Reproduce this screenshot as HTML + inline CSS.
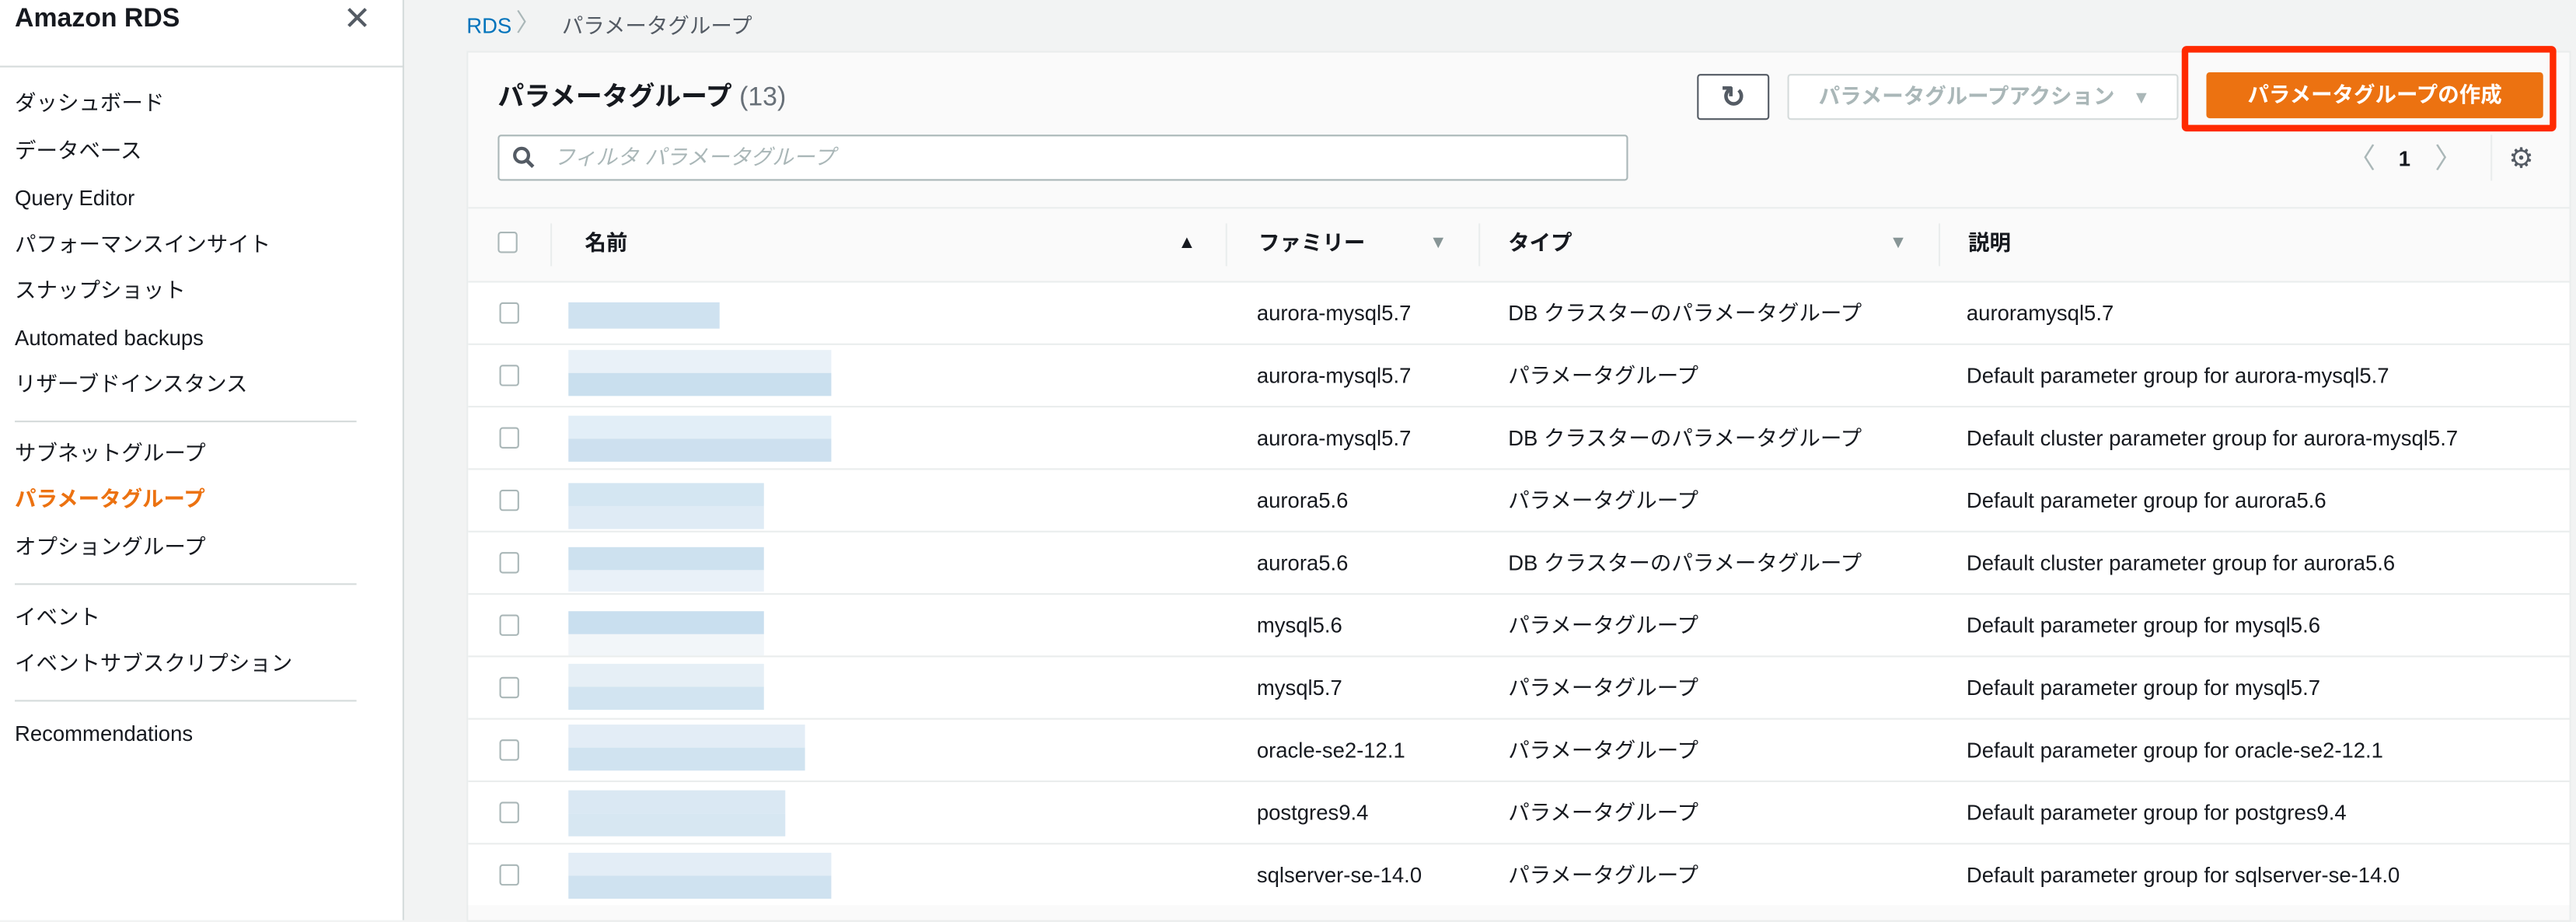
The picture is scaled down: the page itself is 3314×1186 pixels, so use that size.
<!DOCTYPE html>
<html><head><meta charset="utf-8"><style>
*{box-sizing:border-box;margin:0;padding:0}
html,body{width:3314px;height:1154px;overflow:hidden;background:#f2f3f3}
#w{position:absolute;left:0;top:0;width:1568px;height:546px;transform:scale(2.11352);transform-origin:0 0;font-family:"Liberation Sans","Noto Sans CJK JP",sans-serif;color:#16191f;font-size:13px;line-height:16px}
.a{position:absolute;white-space:nowrap}
#side{position:absolute;left:0;top:0;width:246px;height:560px;background:#fff;border-right:1px solid #d5dbdb}
.nav{position:absolute;left:9px;font-size:13px;line-height:16px}
.hr{position:absolute;left:9px;width:208px;height:1px;background:#d5dbdb}
#panel{position:absolute;left:284px;top:31px;width:1281px;height:530px;background:#fafafa;border:1px solid #eaeded}
.row{position:absolute;left:285px;width:1279px;height:38px;background:#fff;border-top:1px solid #eaeded}
.cb{position:absolute;left:19px;width:12px;height:13px;border:1px solid #aab7b8;border-radius:2px;background:#fff}
.t{position:absolute;top:11px;font-size:13px;line-height:16px;color:#16191f;white-space:nowrap}
.b1{position:absolute;left:61px}
</style></head><body><div id="w">
<div id="side">
<div class="a" style="left:9px;top:3px;font-size:16px;line-height:18px;font-weight:bold">Amazon RDS</div>
<div class="a" style="left:209px;top:1px;font-size:20px;line-height:22px;color:#545b64">✕</div>
<div style="position:absolute;left:0;top:40px;width:246px;height:1px;background:#d5dbdb"></div>
<div class="nav" style="top:55px">ダッシュボード</div>
<div class="nav" style="top:84px">データベース</div>
<div class="nav" style="top:113px">Query Editor</div>
<div class="nav" style="top:141px">パフォーマンスインサイト</div>
<div class="nav" style="top:169px">スナップショット</div>
<div class="nav" style="top:198px">Automated backups</div>
<div class="nav" style="top:226px">リザーブドインスタンス</div>
<div class="hr" style="top:256px"></div>
<div class="nav" style="top:268px">サブネットグループ</div>
<div class="nav" style="top:296px;color:#ec7211;font-weight:bold">パラメータグループ</div>
<div class="nav" style="top:325px">オプショングループ</div>
<div class="hr" style="top:355px"></div>
<div class="nav" style="top:368px">イベント</div>
<div class="nav" style="top:396px">イベントサブスクリプション</div>
<div class="hr" style="top:426px"></div>
<div class="nav" style="top:439px">Recommendations</div>
</div>
<div class="a" style="left:284px;top:8px;color:#0073bb">RDS</div>
<div class="a" style="left:314px;top:7px;color:#aab7b8;font-size:15px">〉</div>
<div class="a" style="left:342px;top:8px;color:#545b64">パラメータグループ</div>
<div id="panel"></div>
<div class="a" style="left:303px;top:50px;font-size:16px;line-height:20px;font-weight:bold">パラメータグループ <span style="font-weight:normal;color:#687078">(13)</span></div>
<div class="a" style="left:1033px;top:45px;width:44px;height:28px;border:1px solid #545b64;border-radius:2px;background:#fff;text-align:center;font-size:18px;line-height:26px;color:#545b64;font-weight:bold">↻</div>
<div class="a" style="left:1088px;top:45px;width:238px;height:28px;border:1px solid #d5dbdb;border-radius:2px;background:#fff;color:#aab7b8;font-weight:bold;font-size:13px;line-height:26px;padding-left:18px">パラメータグループアクション&nbsp;&nbsp; <span style="font-size:11px">▼</span></div>
<div class="a" style="left:1328px;top:28px;width:228px;height:52px;border:4px solid #ff2a00;border-radius:3px"></div>
<div class="a" style="left:1343px;top:44px;width:205px;height:28px;background:#ec7211;border-radius:2px;color:#fff;font-weight:bold;text-align:center;line-height:28px;font-size:13px">パラメータグループの作成</div>
<div class="a" style="left:303px;top:82px;width:688px;height:28px;border:1px solid #aab7b8;border-radius:2px;background:#fff"></div>
<svg class="a" style="left:312px;top:89px" width="14" height="14" viewBox="0 0 14 14"><circle cx="5.5" cy="5.5" r="4.2" fill="none" stroke="#545b64" stroke-width="2"/><line x1="8.5" y1="8.5" x2="12.5" y2="12.5" stroke="#545b64" stroke-width="2.2"/></svg>
<div class="a" style="left:337px;top:88px;color:#aab7b8;font-style:italic">フィルタ パラメータグループ</div>
<div class="a" style="left:1429px;top:88px;color:#aab7b8;font-size:17px;line-height:18px">〈</div>
<div class="a" style="left:1460px;top:89px;font-weight:bold">1</div>
<div class="a" style="left:1482px;top:88px;color:#aab7b8;font-size:17px;line-height:18px">〉</div>
<div class="a" style="left:1516px;top:82px;width:1px;height:28px;background:#eaeded"></div>
<div class="a" style="left:1527px;top:87px;font-size:17px;line-height:20px;color:#545b64">⚙</div>
<div class="a" style="left:285px;top:126px;width:1279px;height:46px;background:#fafafa;border-top:1px solid #eaeded"></div>
<div class="a" style="left:303px;top:141px;width:12px;height:13px;border:1px solid #aab7b8;border-radius:2px;background:#fff"></div>
<div class="a" style="left:335px;top:136px;width:1px;height:26px;background:#eaeded"></div>
<div class="a" style="left:356px;top:140px;font-weight:bold">名前</div>
<div class="a" style="left:717px;top:142px;font-size:11px;line-height:12px">▲</div>
<div class="a" style="left:746px;top:136px;width:1px;height:26px;background:#eaeded"></div>
<div class="a" style="left:766px;top:140px;font-weight:bold">ファミリー</div>
<div class="a" style="left:870px;top:142px;font-size:11px;line-height:12px;color:#879596">▼</div>
<div class="a" style="left:900px;top:136px;width:1px;height:26px;background:#eaeded"></div>
<div class="a" style="left:918px;top:140px;font-weight:bold">タイプ</div>
<div class="a" style="left:1150px;top:142px;font-size:11px;line-height:12px;color:#879596">▼</div>
<div class="a" style="left:1180px;top:136px;width:1px;height:26px;background:#eaeded"></div>
<div class="a" style="left:1198px;top:140px;font-weight:bold">説明</div>

<div class="row" style="top:171px"><div class="cb" style="top:12px"></div><div class="b1" style="top:12px;width:92px;height:16px;background:#cfe2f0"></div><div class="t" style="left:480px">aurora-mysql5.7</div><div class="t" style="left:633px">DB クラスターのパラメータグループ</div><div class="t" style="left:912px">auroramysql5.7</div></div>
<div class="row" style="top:209px"><div class="cb" style="top:12px"></div><div class="b1" style="top:3px;width:160px;height:14px;background:#e9f1f8"></div><div class="b1" style="top:17px;width:160px;height:14px;background:#c9dfee"></div><div class="t" style="left:480px">aurora-mysql5.7</div><div class="t" style="left:633px">パラメータグループ</div><div class="t" style="left:912px">Default parameter group for aurora-mysql5.7</div></div>
<div class="row" style="top:247px"><div class="cb" style="top:12px"></div><div class="b1" style="top:5px;width:160px;height:14px;background:#e2eef7"></div><div class="b1" style="top:19px;width:160px;height:14px;background:#cde0ef"></div><div class="t" style="left:480px">aurora-mysql5.7</div><div class="t" style="left:633px">DB クラスターのパラメータグループ</div><div class="t" style="left:912px">Default cluster parameter group for aurora-mysql5.7</div></div>
<div class="row" style="top:285px"><div class="cb" style="top:12px"></div><div class="b1" style="top:8px;width:119px;height:14px;background:#d4e6f2"></div><div class="b1" style="top:22px;width:119px;height:14px;background:#dfebf5"></div><div class="t" style="left:480px">aurora5.6</div><div class="t" style="left:633px">パラメータグループ</div><div class="t" style="left:912px">Default parameter group for aurora5.6</div></div>
<div class="row" style="top:323px"><div class="cb" style="top:12px"></div><div class="b1" style="top:9px;width:119px;height:14px;background:#cde1ef"></div><div class="b1" style="top:23px;width:119px;height:13px;background:#e9f1f8"></div><div class="t" style="left:480px">aurora5.6</div><div class="t" style="left:633px">DB クラスターのパラメータグループ</div><div class="t" style="left:912px">Default cluster parameter group for aurora5.6</div></div>
<div class="row" style="top:361px"><div class="cb" style="top:12px"></div><div class="b1" style="top:10px;width:119px;height:14px;background:#c9dfef"></div><div class="b1" style="top:24px;width:119px;height:13px;background:#f2f6f9"></div><div class="t" style="left:480px">mysql5.6</div><div class="t" style="left:633px">パラメータグループ</div><div class="t" style="left:912px">Default parameter group for mysql5.6</div></div>
<div class="row" style="top:399px"><div class="cb" style="top:12px"></div><div class="b1" style="top:4px;width:119px;height:14px;background:#e6eff6"></div><div class="b1" style="top:18px;width:119px;height:14px;background:#d2e4f1"></div><div class="t" style="left:480px">mysql5.7</div><div class="t" style="left:633px">パラメータグループ</div><div class="t" style="left:912px">Default parameter group for mysql5.7</div></div>
<div class="row" style="top:437px"><div class="cb" style="top:12px"></div><div class="b1" style="top:3px;width:144px;height:14px;background:#e3edf6"></div><div class="b1" style="top:17px;width:144px;height:14px;background:#d0e3f0"></div><div class="t" style="left:480px">oracle-se2-12.1</div><div class="t" style="left:633px">パラメータグループ</div><div class="t" style="left:912px">Default parameter group for oracle-se2-12.1</div></div>
<div class="row" style="top:475px"><div class="cb" style="top:12px"></div><div class="b1" style="top:5px;width:132px;height:14px;background:#dae8f3"></div><div class="b1" style="top:19px;width:132px;height:14px;background:#d7e7f2"></div><div class="t" style="left:480px">postgres9.4</div><div class="t" style="left:633px">パラメータグループ</div><div class="t" style="left:912px">Default parameter group for postgres9.4</div></div>
<div class="row" style="top:513px"><div class="cb" style="top:12px"></div><div class="b1" style="top:5px;width:160px;height:14px;background:#e3edf6"></div><div class="b1" style="top:19px;width:160px;height:14px;background:#cfe2f0"></div><div class="t" style="left:480px">sqlserver-se-14.0</div><div class="t" style="left:633px">パラメータグループ</div><div class="t" style="left:912px">Default parameter group for sqlserver-se-14.0</div></div>
</div></body></html>
